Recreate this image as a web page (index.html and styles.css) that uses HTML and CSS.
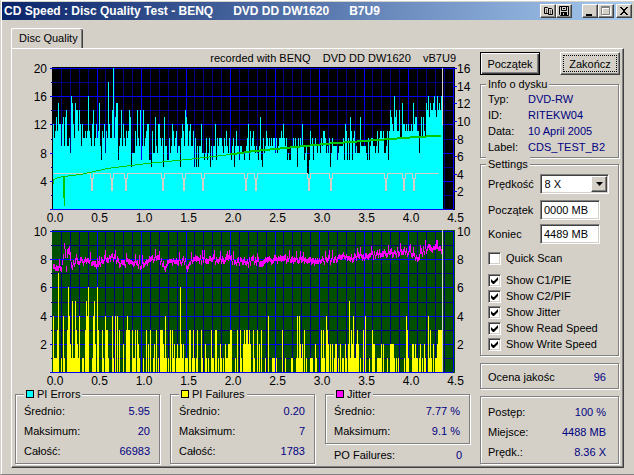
FILE: index.html
```
<!DOCTYPE html>
<html lang="pl">
<head>
  <meta charset="UTF-8">
  <title>CD Speed</title>
  <link rel="stylesheet" href="styles.css">
</head>
<body>

  <header class="titlebar">
    <h1>CD Speed : Disc Quality Test - BENQ      DVD DD DW1620      B7U9</h1>
    <button class="tool" aria-label="Kopiuj">
      <svg width="11" height="10" viewBox="0 0 11 10"><path d="M1.5 1.5h3l1 1v5h-4zM5.5 2.5h3l1 1v5h-4z" fill="none" stroke="#000"/><path d="M3 4h1M3 6h1M7 5h1M7 7h1" stroke="#000"/></svg>
    </button>
    <button class="tool" aria-label="Zapisz">
      <svg width="10" height="10" viewBox="0 0 10 10"><path d="M.5.5h9v9h-8l-1-1z" fill="none" stroke="#000"/><path d="M2.5 0v4.5h5V0M4 2.5h2" fill="none" stroke="#000"/><path d="M2 6h6v3H2z"/><path d="M4 7h1v2H4z" fill="#d4d0c8"/></svg>
    </button>
    <button class="tool first" aria-label="Minimalizuj">
      <svg width="10" height="10" viewBox="0 0 10 10"><path d="M1 8h6v2H1z"/></svg>
    </button>
    <button class="tool" aria-label="Maksymalizuj" disabled>
      <svg width="10" height="10" viewBox="0 0 10 10"><path d="M1.5 1.5h8v8h-8zM1 2.5h9" fill="none" stroke="#fff"/><path d="M.5.5h8v8h-8zM0 1.5h9" fill="none" stroke="#808080"/></svg>
    </button>
    <button class="tool last" aria-label="Zamknij">
      <svg width="10" height="10" viewBox="0 0 10 10"><path d="M1 1h2v1h1v1h2v-1h1v-1h2v1h-1v1h-1v1h-1v2h1v1h1v1h1v1h-2v-1h-1v-1h-2v1h-1v1h-2v-1h1v-1h1v-1h1v-2h-1v-1h-1v-1h-1z"/></svg>
    </button>
  </header>

  <div class="tab">Disc Quality</div>

  <main class="panel">
    <section class="left">
      <p class="recorded">recorded with BENQ    DVD DD DW1620    vB7U9</p>
      <svg id="chartPie" class="chart" viewBox="0 0 456 160"></svg>
      <svg id="chartPif" class="chart" viewBox="0 0 456 160"></svg>

      <div class="stats">
        <fieldset>
          <legend><i class="swatch cyan"></i>PI Errors</legend>
          <p>Średnio: <b>5.95</b></p>
          <p>Maksimum: <b>20</b></p>
          <p>Całość: <b>66983</b></p>
        </fieldset>
        <fieldset>
          <legend><i class="swatch yellow"></i>PI Failures</legend>
          <p>Średnio: <b>0.20</b></p>
          <p>Maksimum: <b>7</b></p>
          <p>Całość: <b>1783</b></p>
        </fieldset>
        <div>
          <fieldset>
            <legend><i class="swatch magenta"></i>Jitter</legend>
            <p>Średnio: <b>7.77 %</b></p>
            <p>Maksimum: <b>9.1 %</b></p>
          </fieldset>
          <p class="po">PO Failures: <b>0</b></p>
        </div>
      </div>
    </section>

    <aside class="right">
      <div class="buttons">
        <button class="btn default">Początek</button>
        <button class="btn focused">Zakończ</button>
      </div>

      <fieldset class="info">
        <legend>Info o dysku</legend>
        <dl>
          <dt>Typ:</dt><dd>DVD-RW</dd>
          <dt>ID:</dt><dd>RITEKW04</dd>
          <dt>Data:</dt><dd>10 April 2005</dd>
          <dt>Label:</dt><dd>CDS_TEST_B2</dd>
        </dl>
      </fieldset>

      <fieldset class="settings">
        <legend>Settings</legend>
        <div class="row">
          <label for="speed">Prędkość</label>
          <span class="combo">
            <select id="speed"><option>8 X</option></select>
            <span class="arrow"><svg width="7" height="4" viewBox="0 0 7 4"><path d="M0 0h7L3.5 4z"/></svg></span>
          </span>
        </div>
        <div class="row">
          <label for="start">Początek</label>
          <input type="text" id="start" value="0000 MB">
        </div>
        <div class="row">
          <label for="end">Koniec</label>
          <input type="text" id="end" value="4489 MB">
        </div>
        <label class="check quick"><input type="checkbox">Quick Scan</label>
        <label class="check"><input type="checkbox" checked>Show C1/PIE</label>
        <label class="check"><input type="checkbox" checked>Show C2/PIF</label>
        <label class="check"><input type="checkbox" checked>Show Jitter</label>
        <label class="check"><input type="checkbox" checked>Show Read Speed</label>
        <label class="check"><input type="checkbox" checked>Show Write Speed</label>
      </fieldset>

      <div class="box score">
        <p>Ocena jakośc <b>96</b></p>
      </div>

      <div class="box progress">
        <p>Postęp: <b>100 %</b></p>
        <p>Miejsce: <b>4488 MB</b></p>
        <p>Prędk.: <b>8.36 X</b></p>
      </div>
    </aside>
  </main>

  <script src="charts.js"></script>
</body>
</html>
```
FILE: styles.css
```
* {
  box-sizing: border-box;
}
body {
  margin: 0;
  min-height: 100vh;
  padding: 1px 0 0 1px;
  border-left: 1px solid #d4d0c8;
  border-bottom: 1px solid #808080;
  background: #d4d0c8;
  box-shadow: inset 1px 1px #fff;
  color: #000;
  font: 11px/16px "Liberation Sans", Arial, sans-serif;
}
p, dl, dd {
  margin: 0;
}
b, dd {
  font-weight: normal;
  color: #000080;
}
button, input, select {
  font: inherit;
  color: #000;
}

/* title bar */
.titlebar {
  display: flex;
  align-items: center;
  height: 18px;
  margin: 1px 2px 0 0;
  padding: 0 0 0 2px;
  background: linear-gradient(to right, #0a246a, #a6caf0);
}
.titlebar h1 {
  flex: 1;
  margin: 0;
  color: #fff;
  font: bold 12px/18px "Liberation Sans", Arial, sans-serif;
  white-space: pre;
}
.tool {
  display: flex;
  align-items: center;
  justify-content: center;
  width: 16px;
  height: 14px;
  padding: 0;
  border: 1px solid;
  border-color: #fff #404040 #404040 #fff;
  background: #d4d0c8;
  box-shadow: inset -1px -1px #808080;
}
.tool.first {
  margin-left: 10px;
}
.tool.last {
  margin-left: 2px;
}

/* tab and panel */
.tab {
  width: 72px;
  height: 20px;
  margin: 8px 0 0 9px;
  padding-left: 7px;
  line-height: 18px;
  white-space: nowrap;
  border: solid #fff;
  border-width: 1px 0 0 1px;
  border-radius: 2px 2px 0 0;
  box-shadow: inset -1px 0 #404040, inset -2px 0 #808080;
}
.panel {
  display: grid;
  grid-template-columns: 1fr 140px;
  column-gap: 9px;
  margin: 0 10px 0 9px;
  padding: 0 3px 2px 3px;
  border: 1px solid;
  border-color: #fff #404040 #404040 #fff;
  box-shadow: inset -1px -1px #808080;
}
.recorded {
  padding-right: 15px;
  line-height: 18px;
  text-align: right;
  white-space: pre;
}
.chart {
  display: block;
  width: 100%;
  overflow: visible;
}

/* groups */
fieldset {
  margin: 0 1px 1px 0;
  padding: 0 9px 2px 8px;
  min-width: 0;
  border: 1px solid #808080;
  box-shadow: 1px 1px #fff, inset 1px 1px #fff;
}
legend {
  display: flex;
  align-items: center;
  height: 14px;
  margin: 0;
  padding: 0 2px;
  background: #d4d0c8;
}
.stats {
  display: grid;
  grid-template-columns: repeat(3, 1fr);
  gap: 9px;
}
.stats p, .box p {
  display: flex;
  justify-content: space-between;
  line-height: 20px;
}
.swatch {
  width: 8px;
  height: 8px;
  margin-right: 3px;
  border: 1px solid #000;
}
.cyan {
  background: #0ff;
}
.yellow {
  background: #ff0;
}
.magenta {
  background: #f0f;
}
.stats .po {
  padding: 0 9px;
}

/* right column */
.right {
  display: flex;
  flex-direction: column;
  padding-top: 3px;
}
.buttons {
  display: flex;
  justify-content: space-between;
  margin-bottom: 2px;
}
.btn {
  width: 60px;
  height: 23px;
  padding: 0;
  border: 1px solid;
  border-color: #fff #404040 #404040 #fff;
  background: #d4d0c8;
  box-shadow: inset -1px -1px #808080;
}
.btn.default {
  border-color: #000;
  box-shadow: inset 1px 1px #fff, inset -1px -1px #404040, inset -2px -2px #808080;
}
.btn.focused {
  outline: 1px dotted #000;
  outline-offset: -4px;
}
.right fieldset {
  padding-left: 7px;
}
.right legend {
  margin-left: -2px;
}
.info dl {
  display: grid;
  grid-template-columns: 40px 1fr;
  white-space: nowrap;
}
.settings {
  margin-top: -2px;
  padding-bottom: 3px;
}
.row {
  display: flex;
  align-items: center;
  height: 20px;
  margin-top: 4px;
}
.row:first-of-type {
  margin: 3px 0 6px;
}
.row > label {
  width: 52px;
}
.row input, .combo {
  width: 60px;
  height: 20px;
  padding: 0 3px;
  border: 1px solid;
  border-color: #808080 #fff #fff #808080;
  background: #fff;
  box-shadow: inset 1px 1px #404040, inset -1px -1px #d4d0c8;
}
.combo {
  display: flex;
  width: 70px;
}
.combo select {
  flex: 1;
  padding: 0 1px;
  border: none;
  background: none;
  appearance: none;
}
.arrow {
  display: flex;
  align-items: center;
  justify-content: center;
  width: 16px;
  height: 16px;
  margin: 1px -2px 0 0;
  border: 1px solid;
  border-color: #fff #404040 #404040 #fff;
  background: #d4d0c8;
  box-shadow: inset -1px -1px #808080;
}
.check {
  display: flex;
  align-items: center;
  height: 16px;
  white-space: nowrap;
}
.check.quick {
  margin: 6px 0;
}
.check input {
  flex: none;
  appearance: none;
  width: 13px;
  height: 13px;
  margin: 0 5px 0 0;
  border: 1px solid;
  border-color: #808080 #fff #fff #808080;
  background: #fff;
  box-shadow: inset 1px 1px #404040, inset -1px -1px #d4d0c8;
}
.check input:checked {
  background: #fff url("data:image/svg+xml,%3Csvg xmlns='http://www.w3.org/2000/svg' width='7' height='7'%3E%3Cpath d='M0 2l2 2h1l4-4v3L3 7H2L0 5z'/%3E%3C/svg%3E") center no-repeat;
}
.box {
  margin: 6px 1px 1px 0;
  padding: 5px 12px 1px 7px;
  border: 1px solid #808080;
  box-shadow: 1px 1px #fff, inset 1px 1px #fff;
}
.box.score {
  padding: 3px 12px 1px 7px;
}

/* chart parts */
.axis {
  font-size: 12px;
}
.grid-major {
  stroke: #0000ff;
}
.grid-minor {
  stroke: #000080;
}
.pie {
  fill: #0ff;
}
.pif {
  fill: #ff0;
}
.jitter {
  fill: #f0f;
}
.read {
  fill: none;
  stroke: #00c800;
}
.read.thick {
  stroke-width: 2px;
}
.write {
  fill: none;
  stroke: #d4d0c8;
}
```
FILE: charts.js
```
const NS = 'http://www.w3.org/2000/svg';
const X0 = 38;        // 0.0 GB
const PER_GB = 89;
const END = 427;      // end of the scanned area

// PI errors for each column, base 36
const pie =
  'cabdbfcc9cd9de99a8gfcafeebec9caababgba9ce9acabf97b' +
  'ac8baicaaekadff79ae9ca9babed6888b9ea9e79e9abcc776b' +
  '88d98cca9a6d9977a89cb9ab8996acb9edc9bc99b6a69699c8' +
  '878a78a69799c7a9aaa98a9b98a879a69b9979988789ac7' +
  'b9ab989879d76a89ba9a9a9aa8a89aabaca9a787799a9a96a9' +
  'a9c9789557b9a79a98998a9bba898a68a9999789999a7cb7a7' +
  'db7ab89888d9999987a79aa9989b8abbab889b7bedcbgdebbe' +
  'aafccbcbcbbcbfcddbb8adadbafegdfeefgedgefeg';

// PI failures for each column
const pif =
  '41113700104100364215115321400110354600014520630003' +
  '10433100041040403000200343300311303210001003020300' +
  '12030103332141010303120121162120111033013101300031' +
  '002101003110330102101021122' +
  '33000103003102323323200310030203000100400011101000' +
  '00300100000110001414212030100011100210000313104320' +
  '20201220102011021025132411232010030400010032200111' +
  '12020001002222101010000010431000221211012010210041' +
  '3102011233331';

const readSpeed = [[38, 116], [38, 112], [43, 110], [48, 109], [48, 123], [49, 138], [49, 109],
  [65, 107], [92, 101], [132, 96], [172, 92], [215, 87], [235, 84], [285, 79], [315, 76],
  [355, 73], [395, 70], [426, 68]];

const writeDips = [77, 97, 111, 148, 169, 188, 231, 241, 294, 316, 371, 389, 399];

const jitterTrend = [[38, 7.5], [46, 7.4], [48, 8.4], [49, 8.8], [51, 7.5], [53, 8.7], [55, 7.9],
  [57, 7.6], [60, 8], [75, 7.9], [81, 7.4], [84, 7.6], [88, 8], [97, 8.2], [105, 7.7], [113, 7.9],
  [125, 7.6], [140, 8.1], [148, 7.8], [150, 7.4], [153, 7.9], [170, 7.9], [172, 7.4], [177, 8],
  [215, 8], [233, 7.8], [237, 8], [245, 7.8], [255, 8], [275, 8], [295, 7.9], [315, 8],
  [330, 8.3], [335, 8.1], [355, 8.3], [365, 8.5], [375, 8.4], [385, 8.5], [393, 8.6], [401, 8.1],
  [408, 8.6], [413, 8.9], [418, 8.8], [427, 8.6]];

function add(parent, name, attrs, text) {
  const el = document.createElementNS(NS, name);
  for (const key in attrs) el.setAttribute(key, attrs[key]);
  if (text !== undefined) el.textContent = text;
  parent.appendChild(el);
  return el;
}

function line(svg, x1, y1, x2, y2, cls) {
  add(svg, 'path', { d: `M${x1} ${y1}L${x2} ${y2}`, class: cls, 'shape-rendering': 'crispEdges' });
}

function label(svg, x, y, anchor, text) {
  add(svg, 'text', { x, y: y + 4, 'text-anchor': anchor, class: 'axis' }, text);
}

// background, grid and the axis labels
function drawFrame(svg, top, bg, leftMax, rightMax, step) {
  add(svg, 'rect', { x: 37, y: top, width: 403, height: 143, fill: bg });
  const zero = top + 142;
  for (let i = 0; i <= 45; i++) {
    const x = Math.round(X0 + i * PER_GB / 10) - 0.5;
    if (i && i % 5) line(svg, x, top + 1, x, zero, 'grid-minor');
  }
  for (let i = 0; i <= 10; i++) {
    const y = Math.round(zero - i * 14.1) + 0.5;
    line(svg, i % 2 ? 36 : 35, y, 438, y, i % 2 ? 'grid-minor' : 'grid-major');
    if (i && i % 2 === 0) label(svg, 32, y, 'end', i * leftMax / 10);
  }
  for (let i = 5; i <= 45; i += 5) {
    const x = Math.round(X0 + i * PER_GB / 10) - 0.5;
    line(svg, x, top + 1, x, zero, 'grid-major');
  }
  for (let v = step; v <= rightMax; v += step) {
    const y = Math.round(zero - v * 141 / rightMax) + 0.5;
    if (rightMax > 10) line(svg, 439, y, 442, y, 'grid-major');
    label(svg, 442, y, 'start', v);
  }
  for (let i = 0; i <= 9; i++) {
    label(svg, 40 + i * PER_GB / 2, top + 151, 'middle', (i / 2).toFixed(1));
  }
}

function drawBars(svg, data, zero, unit, cls) {
  let d = '';
  for (let i = 0; i < Math.min(data.length, END - X0); i++) {
    const h = Math.round(parseInt(data[i], 36) * unit);
    if (h) d += `M${X0 + i} ${zero}v${-h}h1v${h}z`;
  }
  add(svg, 'path', { d, class: cls, 'shape-rendering': 'crispEdges' });
}

function drawRead(svg, points, cls) {
  add(svg, 'polyline', { points: points.map(p => `${p[0] + 0.5},${p[1] + 0.5}`).join(' '), class: cls, 'shape-rendering': 'crispEdges' });
}

function drawPie() {
  const svg = document.getElementById('chartPie');
  drawFrame(svg, 0, '#000', 20, 16, 2);
  line(svg, 427.5, 1, 427.5, 142, 'write');
  drawBars(svg, pie, 142, 7.05, 'pie');
  add(svg, 'rect', { x: 427, y: 58, width: 1, height: 84, class: 'pie' });

  let d = 'M38 106.5';
  writeDips.forEach(x => {
    d += `H${x - 1.5}V111H${x - 0.5}V123H${x + 0.5}V111H${x + 1.5}V106.5`;
  });
  add(svg, 'path', { d: d + 'H424', class: 'write', 'shape-rendering': 'crispEdges' });
  drawRead(svg, readSpeed, 'read');
  drawRead(svg, readSpeed.filter(p => p[0] >= 215), 'read thick');
}

function trend(x) {
  for (let i = 1; i < jitterTrend.length; i++) {
    const [x1, v1] = jitterTrend[i - 1];
    const [x2, v2] = jitterTrend[i];
    if (x <= x2) return v1 + (v2 - v1) * (x - x1) / (x2 - x1);
  }
  return 8.6;
}

function drawPif() {
  const svg = document.getElementById('chartPif');
  drawFrame(svg, 3, '#005000', 10, 10, 2);
  line(svg, 427.5, 3, 427.5, 145, 'write');
  drawBars(svg, pif, 145, 14.1, 'pif');

  let seed = 7;
  let d = '';
  for (let x = X0; x < END; x++) {
    seed = (seed * 16807) % 2147483647;
    const noise = (seed % 100) / 100;
    const y = Math.round(145 - trend(x) * 14.1 + (noise - 0.5) * 6);
    const up = noise < 0.1 ? 9 : 4 + seed % 3;
    d += `M${x} ${y + 3}v${-up}h1v${up}z`;
  }
  add(svg, 'path', { d, class: 'jitter', 'shape-rendering': 'crispEdges' });
}

drawPie();
drawPif();
```
